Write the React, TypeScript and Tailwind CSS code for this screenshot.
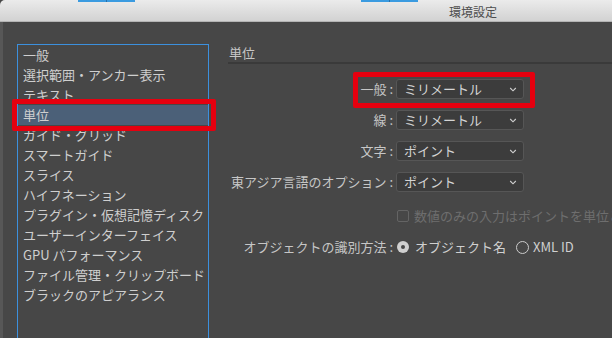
import React from "react";

const listItems = [
  "一般",
  "選択範囲・アンカー表示",
  "テキスト",
  "単位",
  "ガイド・グリッド",
  "スマートガイド",
  "スライス",
  "ハイフネーション",
  "プラグイン・仮想記憶ディスク",
  "ユーザーインターフェイス",
  "GPU パフォーマンス",
  "ファイル管理・クリップボード",
  "ブラックのアピアランス",
];

const Chevron = () => (
  <svg width="8" height="5" viewBox="0 0 8 5" fill="none">
    <polyline points="1.2,1 4,3.8 6.8,1" stroke="#d0d0d0" strokeWidth="1.1" />
  </svg>
);

const Select = ({ value }: { value: string }) => (
  <div className="flex items-center justify-between w-[128px] h-[20px] pl-[7px] pr-[6px] rounded-[3px] bg-[#3c3c3c] border border-[#565656] text-[#d4d4d4]">
    <span>{value}</span>
    <Chevron />
  </div>
);

const Row = ({
  label,
  className,
  children,
}: {
  label: string;
  className?: string;
  children: React.ReactNode;
}) => (
  <div className={`flex items-center h-[20px] ${className ?? ""}`}>
    <div className="w-[165px] text-right whitespace-nowrap text-[#c6c6c6]">{label}</div>
    <div className="ml-[3px] flex items-center">{children}</div>
  </div>
);

export default function App() {
  return (
    <div className="relative w-[612px] h-[338px] overflow-hidden bg-[#474747] font-['Noto_Sans_CJK_JP',sans-serif] text-[13px] leading-[20px]">
      {/* title bar */}
      <div className="relative h-[22px] rounded-tl-[5px] bg-gradient-to-b from-[#ebebeb] to-[#d2d2d2] border-b border-[#b4b4b4]">
        <div className="flex gap-[226px] pl-[78px]">
          <div className="flex w-[57px] h-[2px]">
            <div className="w-[28px] bg-[#3b9be0]" />
            <div className="w-[1px] bg-[#2a6fa8]" />
            <div className="flex-1 bg-[#3b9be0]" />
          </div>
          <div className="flex w-[57px] h-[2px]">
            <div className="w-[28px] bg-[#3b9be0]" />
            <div className="w-[1px] bg-[#2a6fa8]" />
            <div className="flex-1 bg-[#3b9be0]" />
          </div>
        </div>
        <div className="w-[946px] text-center text-[12px] leading-[20px] text-[#4d4d4d]">環境設定</div>
      </div>

      {/* body */}
      <div className="flex h-[316px] border-l-[3px] border-[#575757]">
        <div className="pl-[14px] pt-[22px]">
          <div className="w-[192px] h-[300px] border border-[#3c90de]">
            {listItems.map((item) => (
              <div
                key={item}
                className={`h-[20px] pl-[5px] whitespace-nowrap text-[#cfcfcf] ${
                  item === "単位" ? "bg-[#4b6078]" : ""
                }`}
              >
                {item}
              </div>
            ))}
          </div>
        </div>

        <div className="ml-[19px] flex-1 pt-[22px]">
          <div className="h-[20px] pl-[1px] border-b-2 border-[#3a3a3a] text-[#c6c6c6] leading-[17px]">単位</div>

          <Row label="一般 :" className="mt-[15px]">
            <Select value="ミリメートル" />
          </Row>
          <Row label="線 :" className="mt-[11px]">
            <Select value="ミリメートル" />
          </Row>
          <Row label="文字 :" className="mt-[11px]">
            <Select value="ポイント" />
          </Row>
          <Row label="東アジア言語のオプション :" className="mt-[11px]">
            <Select value="ポイント" />
          </Row>

          <div className="flex items-center h-[20px] mt-[14px] pl-[169px] whitespace-nowrap text-[#6e6e6e]">
            <div className="w-[12px] h-[12px] shrink-0 rounded-[2px] border border-[#646464]" />
            <span className="ml-[5px]">数値のみの入力はポイントを単位とする</span>
          </div>

          <Row label="オブジェクトの識別方法 :" className="mt-[11px]">
            <div className="ml-[1px] flex items-center justify-center w-[12px] h-[12px] rounded-full bg-[#d0d0d0]">
              <div className="w-[4px] h-[4px] rounded-full bg-[#474747]" />
            </div>
            <span className="ml-[6px] text-[#d0d0d0]">オブジェクト名</span>
            <div className="ml-[10px] w-[13px] h-[13px] rounded-full border border-[#cccccc]" />
            <span className="ml-[4px] text-[#d0d0d0]">XML ID</span>
          </Row>
        </div>
      </div>

      {/* red annotation frames */}
      <div className="absolute left-[12px] top-[99px] w-[204px] h-[32px] border-[5px] border-[#e5000f] rounded-[2px]" />
      <div className="absolute left-[353px] top-[72px] w-[182px] h-[36px] border-[5px] border-[#e5000f] rounded-[2px]" />
    </div>
  );
}
